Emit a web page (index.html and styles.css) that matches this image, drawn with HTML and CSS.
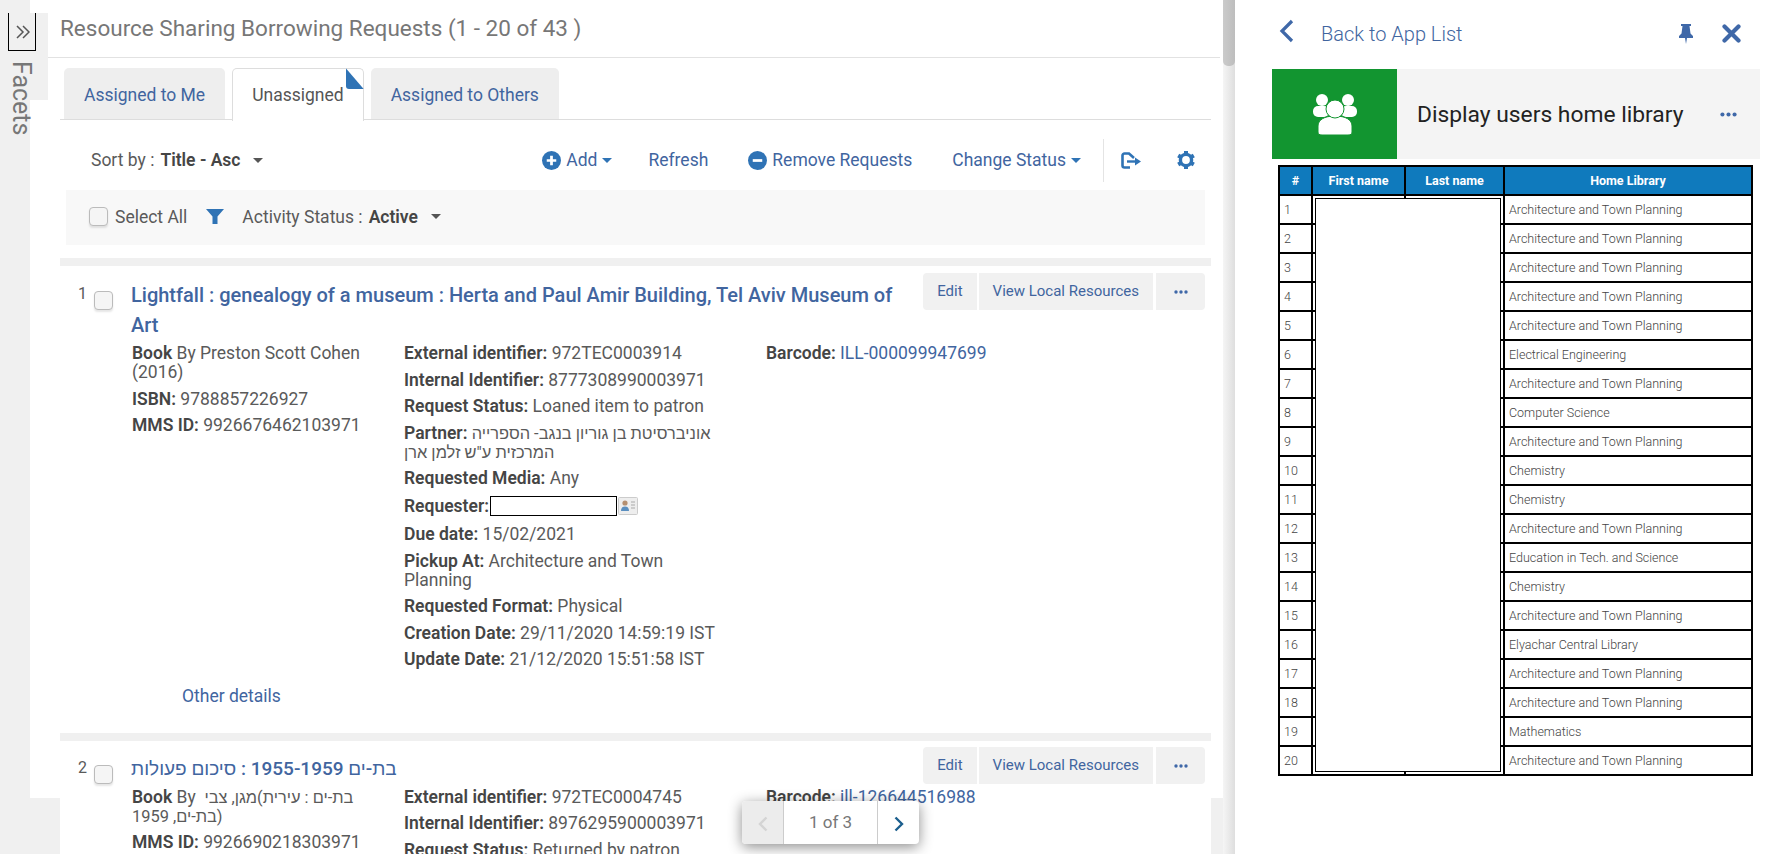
FILE: index.html
```html
<!DOCTYPE html>
<html>
<head>
	<meta charset="utf-8">
	<title>Resource Sharing Borrowing Requests</title>
	<link rel="stylesheet" href="styles.css">
</head>
<body>
<div class="app">
	<aside class="facets">
		<div class="facets_tab"></div>
		<div class="facets_btn"><svg class="facets_arrows" viewBox="0 0 14 14"><path d="M1 1l6 6-6 6M7 1l6 6-6 6" fill="none" stroke="#555" stroke-width="1.500"/></svg></div>
		<div class="facets_label">Facets</div>
	</aside>

	<main class="results">
		<h1 class="results_title">Resource Sharing Borrowing Requests (1 - 20 of 43 )</h1>

		<div class="tabs">
			<a class="tab">Assigned to Me</a>
			<a class="tab tab_active">Unassigned<span class="tab_corner"></span></a>
			<a class="tab">Assigned to Others</a>
		</div>

		<div class="toolbar">
			<span class="sort_label">Sort by :</span>
			<b class="sort_value">Title - Asc</b>
			<span class="caret caret_dark"></span>
			<div class="toolbar_actions">
				<a class="action action_add">
					<svg class="round_icon" viewBox="0 0 18 18"><circle cx="9" cy="9" r="9" fill="#2f73b5"/><path d="M9 4.500v9M4.500 9h9" stroke="#fff" stroke-width="2.600"/></svg>
					Add<span class="caret caret_blue"></span>
				</a>
				<a class="action">Refresh</a>
				<a class="action">
					<svg class="round_icon" viewBox="0 0 18 18"><circle cx="9" cy="9" r="9" fill="#2f73b5"/><path d="M4.500 9h9" stroke="#fff" stroke-width="2.600"/></svg>
					Remove Requests
				</a>
				<a class="action">Change Status<span class="caret caret_blue"></span></a>
				<span class="toolbar_divider"></span>
				<svg class="export_icon" viewBox="0 0 20 17"><path d="M9 15.500H3.500a2 2 0 0 1-2-2v-10a2 2 0 0 1 2-2H8l5 4.500" fill="none" stroke="#2f73b5" stroke-width="2.600"/><path d="M6 9.500h9" stroke="#2f73b5" stroke-width="2.400"/><path d="M14 5.500l6 4-6 4z" fill="#2f73b5"/></svg>
				<svg class="gear_icon" viewBox="0 0 18 18">
					<circle cx="9" cy="9" r="5.600" fill="none" stroke="#2f73b5" stroke-width="3.400"/>
					<path d="M9 0v3M9 15v3M1.200 4.500l2.600 1.500M14.200 12l2.600 1.500M1.200 13.500l2.600-1.500M14.200 6l2.600-1.500" stroke="#2f73b5" stroke-width="4"/>
				</svg>
			</div>
		</div>

		<div class="filterbar">
			<input type="checkbox" class="check">
			<span class="select_all">Select All</span>
			<svg class="filter_icon" viewBox="0 0 18 15"><path d="M0 0h18l-6.500 7.500V15h-5V7.500z" fill="#2f73b5"/></svg>
			<span class="sort_label">Activity Status :</span>
			<b class="sort_value">Active</b>
			<span class="caret caret_dark"></span>
		</div>

		<div class="band"></div>
		<article class="record record_first">
			<div class="record_index"><span class="record_num">1</span><input type="checkbox" class="check"></div>
			<div class="record_body">
				<div class="record_head">
					<a class="record_title">Lightfall : genealogy of a museum : Herta and Paul Amir Building, Tel Aviv Museum of Art</a>
					<div class="btn_group">
						<a class="btn">Edit</a>
						<a class="btn">View Local Resources</a>
						<a class="btn btn_more"><svg class="dots" viewBox="0 0 14 4"><circle cx="2" cy="2" r="1.700"/><circle cx="7" cy="2" r="1.700"/><circle cx="12" cy="2" r="1.700"/></svg></a>
					</div>
				</div>
				<div class="record_cols">
					<div class="col_one">
						<p><b>Book</b> By Preston Scott Cohen (2016)</p>
						<p><b>ISBN:</b> 9788857226927</p>
						<p><b>MMS ID:</b> 9926676462103971</p>
					</div>
					<div class="col_two">
						<p><b>External identifier:</b> 972TEC0003914</p>
						<p><b>Internal Identifier:</b> 8777308990003971</p>
						<p><b>Request Status:</b> Loaned item to patron</p>
						<p><b>Partner:</b> <span class="he">אוניברסיטת בן גוריון בנגב- הספרייה המרכזית ע"ש זלמן ארן</span></p>
						<p><b>Requested Media:</b> Any</p>
						<p class="requester"><b>Requester:</b><span class="hidden_name"></span>
							<svg class="card_icon" viewBox="0 0 20 18"><rect x=".5" y=".5" width="19" height="17" rx="1" fill="#eee" stroke="#ccc"/><circle cx="7" cy="6" r="2.600" fill="#b58f70"/><path d="M3 14c0-3 1.500-4.500 4-4.500s4 1.500 4 4.500z" fill="#5b8fc0"/><path d="M13 5h4M13 8h4M13 11h4" stroke="#aaa"/></svg>
						</p>
						<p><b>Due date:</b> 15/02/2021</p>
						<p><b>Pickup At:</b> Architecture and Town Planning</p>
						<p><b>Requested Format:</b> Physical</p>
						<p><b>Creation Date:</b> 29/11/2020 14:59:19 IST</p>
						<p><b>Update Date:</b> 21/12/2020 15:51:58 IST</p>
					</div>
					<div class="col_three">
						<p><b>Barcode:</b> <a class="link">ILL-000099947699</a></p>
					</div>
				</div>
				<a class="other_details">Other details</a>
			</div>
		</article>

		<div class="band"></div>
		<article class="record">
			<div class="record_index"><span class="record_num">2</span><input type="checkbox" class="check"></div>
			<div class="record_body">
				<div class="record_head">
					<a class="record_title title_he">בת-ים 1955-1959 : סיכום פעולות</a>
					<div class="btn_group">
						<a class="btn">Edit</a>
						<a class="btn">View Local Resources</a>
						<a class="btn btn_more"><svg class="dots" viewBox="0 0 14 4"><circle cx="2" cy="2" r="1.700"/><circle cx="7" cy="2" r="1.700"/><circle cx="12" cy="2" r="1.700"/></svg></a>
					</div>
				</div>
				<div class="record_cols">
					<div class="col_one">
						<p><b>Book</b> By &nbsp;<span class="he">בת-ים : עירית)מגן, צבי (בת-ים, 1959</span></p>
						<p><b>MMS ID:</b> 9926690218303971</p>
					</div>
					<div class="col_two">
						<p><b>External identifier:</b> 972TEC0004745</p>
						<p><b>Internal Identifier:</b> 8976295900003971</p>
						<p><b>Request Status:</b> Returned by patron</p>
					</div>
					<div class="col_three">
						<p><b>Barcode:</b> <a class="link">ill-126644516988</a></p>
					</div>
				</div>
			</div>
		</article>
	</main>

	<div class="scrolltrack"><div class="scrollthumb"></div></div>

	<aside class="apps">
		<div class="apps_top">
			<svg class="back_icon" viewBox="0 0 15 24"><path d="M13 2L3 12l10 10" fill="none" stroke="#3f68a8" stroke-width="3.200"/></svg>
			<a class="back_link">Back to App List</a>
			<svg class="pin_icon" viewBox="0 0 14 20"><path d="M2 0h10v2h-1.500l1 7.500L14 12v2H8l-1 6-1-6H0v-2l2.500-2.500 1-7.500H2z" fill="#3f68a8"/></svg>
			<svg class="close_icon" viewBox="0 0 19 19"><path d="M2.500 2.500l14 14M16.500 2.500l-14 14" stroke="#3f68a8" stroke-width="4.200" stroke-linecap="round"/></svg>
		</div>

		<div class="app_card">
			<div class="app_logo">
				<svg class="users_icon" viewBox="0 0 44 41">
					<circle cx="9" cy="6" r="6" fill="#fff"/>
					<circle cx="35" cy="6" r="6" fill="#fff"/>
					<rect x="0" y="12" width="16" height="11" rx="5" fill="#fff"/>
					<rect x="28" y="12" width="16" height="11" rx="5" fill="#fff"/>
					<path d="M9 41c-3 0-4-1-4-3v-6c0-6 6-10 17-10s17 4 17 10v6c0 2-1 3-4 3z" fill="#fff" stroke="#129530" stroke-width="1"/>
					<circle cx="22" cy="15" r="9" fill="#fff" stroke="#129530" stroke-width="1"/>
				</svg>
			</div>
			<div class="app_name">Display users home library</div>
			<svg class="dots app_dots" viewBox="0 0 14 4"><circle cx="2" cy="2" r="1.700"/><circle cx="7" cy="2" r="1.700"/><circle cx="12" cy="2" r="1.700"/></svg>
		</div>

		<div class="table_wrap">
			<table class="lib_table">
				<colgroup><col class="c_num"><col class="c_first"><col class="c_last"><col class="c_home"></colgroup>
				<thead><tr><th>#</th><th>First name</th><th>Last name</th><th>Home Library</th></tr></thead>
				<tbody>
					<tr><td>1</td><td></td><td></td><td>Architecture and Town Planning</td></tr>
					<tr><td>2</td><td></td><td></td><td>Architecture and Town Planning</td></tr>
					<tr><td>3</td><td></td><td></td><td>Architecture and Town Planning</td></tr>
					<tr><td>4</td><td></td><td></td><td>Architecture and Town Planning</td></tr>
					<tr><td>5</td><td></td><td></td><td>Architecture and Town Planning</td></tr>
					<tr><td>6</td><td></td><td></td><td>Electrical Engineering</td></tr>
					<tr><td>7</td><td></td><td></td><td>Architecture and Town Planning</td></tr>
					<tr><td>8</td><td></td><td></td><td>Computer Science</td></tr>
					<tr><td>9</td><td></td><td></td><td>Architecture and Town Planning</td></tr>
					<tr><td>10</td><td></td><td></td><td>Chemistry</td></tr>
					<tr><td>11</td><td></td><td></td><td>Chemistry</td></tr>
					<tr><td>12</td><td></td><td></td><td>Architecture and Town Planning</td></tr>
					<tr><td>13</td><td></td><td></td><td>Education in Tech. and Science</td></tr>
					<tr><td>14</td><td></td><td></td><td>Chemistry</td></tr>
					<tr><td>15</td><td></td><td></td><td>Architecture and Town Planning</td></tr>
					<tr><td>16</td><td></td><td></td><td>Elyachar Central Library</td></tr>
					<tr><td>17</td><td></td><td></td><td>Architecture and Town Planning</td></tr>
					<tr><td>18</td><td></td><td></td><td>Architecture and Town Planning</td></tr>
					<tr><td>19</td><td></td><td></td><td>Mathematics</td></tr>
					<tr><td>20</td><td></td><td></td><td>Architecture and Town Planning</td></tr>
				</tbody>
			</table>
			<div class="redacted"></div>
		</div>
	</aside>

	<div class="corner corner_left"></div>
	<div class="corner corner_right"></div>

	<div class="pager">
		<span class="pager_prev"><svg class="pager_icon" viewBox="0 0 10 16"><path d="M8.500 1.500L2 8l6.500 6.500" fill="none" stroke="#d4d4d4" stroke-width="2.400"/></svg></span>
		<span class="pager_text">1 of 3</span>
		<span class="pager_next"><svg class="pager_icon" viewBox="0 0 10 16"><path d="M1.500 1.500L8 8l-6.500 6.500" fill="none" stroke="#1c5f8e" stroke-width="2.400"/></svg></span>
	</div>
</div>
</body>
</html>
```

FILE: styles.css
```css
* {
	box-sizing:border-box;
}
html, body {
	margin:0;
	height:100%;
	overflow:hidden;
	background:#fff;
}
body {
	font-family:Roboto, "Liberation Sans", sans-serif;
	font-size:17.500px;
	color:#5a5a5a;
}
p {
	margin:0;
}
a {
	color:#41659f;
}
b {
	font-weight:600;
	color:#454545;
}
.he {
	font-size:16.400px;
}
.app {
	position:relative;
	display:flex;
	width:1788px;
	height:854px;
	overflow:hidden;
}

/* facets strip */
.facets {
	position:relative;
	flex:0 0 30px;
	background:#f0f0f0;
}
.facets_tab {
	position:absolute;
	left:30px;
	top:13px;
	width:18px;
	height:87px;
	background:#f0f0f0;
}
.facets_btn {
	position:absolute;
	left:8px;
	top:13px;
	width:28px;
	height:38px;
	padding:12px 0 0 7px;
	border:solid 1px #000;
	border-top:none;
}
.facets_arrows {
	display:block;
	width:14px;
	height:14px;
}
.facets_label {
	position:absolute;
	left:9px;
	top:61px;
	writing-mode:vertical-rl;
	font-size:25px;
	line-height:25px;
	color:#777;
}

/* results */
.results {
	flex:0 0 1193px;
	padding:0 12px 0 30px;
}
.results_title {
	margin:0 -9px 0 -12px;
	padding:0 0 0 12px;
	height:58px;
	line-height:56px;
	border-bottom:solid 1px #e2e2e2;
	font-size:22.500px;
	font-weight:400;
	color:#777;
	white-space:nowrap;
}
.tabs {
	display:flex;
	gap:7px;
	margin-top:10px;
	padding-left:4px;
	height:52px;
	border-bottom:solid 1px #ddd;
}
.tab {
	position:relative;
	height:51px;
	padding:0 20px;
	line-height:55px;
	background:#eee;
	border-radius:5px 5px 0 0;
	white-space:nowrap;
}
.tab_active {
	height:53px;
	background:#fff;
	border:solid 1px #ddd;
	border-bottom:none;
	color:#555;
	line-height:53px;
	padding:0 19px;
}
.tab_corner {
	position:absolute;
	right:-1px;
	top:-1px;
	width:18px;
	height:21px;
	background:#2f73b5;
	clip-path:polygon(0 0, 100% 100%, 0 100%);
	border-radius:0 0 0 3px;
}
.toolbar {
	display:flex;
	align-items:center;
	height:70px;
	padding:10px 16px 0 31px;
	white-space:nowrap;
}
.sort_value {
	margin-left:6px;
}
.caret {
	display:inline-block;
	width:0;
	height:0;
	border-left:5px solid transparent;
	border-right:5px solid transparent;
	border-top:5px solid #555;
}
.caret_dark {
	margin-left:13px;
}
.caret_blue {
	margin-left:5px;
	border-top-color:#2f73b5;
}
.toolbar_actions {
	display:flex;
	align-items:center;
	margin-left:auto;
}
.action {
	display:flex;
	align-items:center;
	margin-right:40px;
}
.action_add {
	margin-right:36px;
}
.round_icon {
	width:19px;
	height:19px;
	margin-right:5px;
}
.toolbar_divider {
	width:1px;
	height:43px;
	margin:0 17px 0 -18px;
	background:#e4e4e4;
}
.export_icon {
	width:20px;
	height:17px;
	margin-right:36px;
}
.gear_icon {
	width:18px;
	height:18px;
}
.filterbar {
	display:flex;
	align-items:center;
	height:55px;
	margin:0 6px;
	padding:0 0 2px 23px;
	background:#f8f8f8;
}
.check {
	appearance:none;
	flex:none;
	width:19px;
	height:19px;
	margin:0;
	background:#f5f5f5;
	border:solid 1px #bbb;
	border-radius:4px;
	box-shadow:0 2px 2px rgba(0, 0, 0, .1);
}
.select_all {
	margin-left:7px;
}
.filter_icon {
	width:18px;
	height:15px;
	margin:0 18px 1px 19px;
}
.band {
	height:8px;
	margin-top:13px;
	background:#f0f0f0;
}
.record + .band {
	margin-top:0;
}
.record {
	display:flex;
	padding-top:6px;
	padding-bottom:27px;
}
.record_first {
	padding-top:7px;
}
.record_index {
	flex:0 0 71px;
	display:flex;
	align-items:flex-start;
	padding:11px 0 0 18px;
}
.record_num {
	width:16px;
	line-height:20px;
	font-size:16px;
}
.record_index .check {
	margin-top:7px;
}
.record_body {
	flex:1;
	padding-right:6px;
}
.record_head {
	display:flex;
	justify-content:space-between;
	align-items:flex-start;
}
.record_title {
	width:775px;
	margin-top:7px;
	font-size:20px;
	font-weight:500;
	line-height:30px;
}
.title_he {
	font-size:19px;
}
.btn_group {
	display:flex;
	gap:2px;
}
.btn {
	height:37px;
	padding:0 14px;
	line-height:36px;
	font-size:15px;
	background:#f1f1f1;
	white-space:nowrap;
}
.btn:first-child {
	border-radius:4px 0 0 4px;
}
.btn_more {
	margin-left:1px;
	width:49px;
	padding:0;
	border-radius:0 4px 4px 0;
	text-align:center;
}
.dots {
	width:14px;
	height:4px;
	fill:#3f68a8;
	vertical-align:2px;
}
.record_cols {
	display:flex;
	margin-top:4px;
	line-height:19px;
}
.record_cols p {
	margin-bottom:7.500px;
}
.record_cols .requester {
	display:flex;
	align-items:center;
	height:21px;
	margin-bottom:8.500px;
}
.col_one {
	flex:0 0 273px;
	padding:0 32px 0 1px;
}
.col_two {
	flex:0 0 362px;
	padding-right:38px;
}
.hidden_name {
	width:127px;
	height:20px;
	margin-left:1px;
	border:solid 1px #000;
	background:#fff;
}
.card_icon {
	width:20px;
	height:18px;
	margin-left:1px;
}
.link {
	color:#41659f;
}
.other_details {
	display:block;
	margin:10px 0 0 51px;
	line-height:19px;
}

/* scrollbar */
.scrolltrack {
	flex:0 0 12px;
	background:linear-gradient(90deg, #f5f5f5, #dedede);
}
.scrollthumb {
	height:66px;
	background:linear-gradient(90deg, #cbcbcb, #bdbdbd);
	border-radius:0 0 5px 5px;
}
.corner {
	position:absolute;
	top:798px;
	bottom:0;
	background:#f0f0f0;
}
.corner_left {
	left:0;
	width:60px;
}
.corner_right {
	left:1211px;
	width:12px;
}

/* app panel */
.apps {
	flex:1;
	padding:0 28px 0 37px;
}
.apps_top {
	display:flex;
	align-items:center;
	height:67px;
	margin-bottom:2px;
	padding-left:7px;
}
.back_icon {
	width:15px;
	height:24px;
	margin-bottom:6px;
}
.back_link {
	margin-left:27px;
	font-size:20px;
	font-weight:300;
}
.pin_icon {
	width:14px;
	height:20px;
	margin-left:auto;
}
.close_icon {
	width:19px;
	height:19px;
	margin:0 19px 0 29px;
}
.app_card {
	display:flex;
	align-items:center;
	height:90px;
	background:#f4f4f4;
}
.app_logo {
	display:flex;
	align-items:center;
	justify-content:center;
	width:125px;
	height:90px;
	background:#129530;
}
.users_icon {
	width:44px;
	height:41px;
}
.app_name {
	margin-left:20px;
	font-size:22.800px;
	color:#222;
}
.app_dots {
	width:17px;
	height:5px;
	margin-left:auto;
	margin-right:23px;
}
.table_wrap {
	position:relative;
	margin:6px 7px 0 6px;
}
.lib_table {
	width:475px;
	table-layout:fixed;
	border-collapse:collapse;
	border:solid 2px #000;
}
.c_num {
	width:33px;
}
.c_first {
	width:93px;
}
.c_last {
	width:99px;
}
.lib_table th {
	height:29px;
	padding:0;
	border:solid 2px #000;
	background:#0f7abd;
	color:#fff;
	font-size:12.500px;
	font-weight:700;
	text-align:center;
}
.lib_table td {
	height:29px;
	padding:0 4px;
	border:solid 2px #000;
	font-size:12.500px;
	font-weight:300;
	color:#444;
	white-space:nowrap;
}
.redacted {
	position:absolute;
	left:37px;
	top:33px;
	width:186px;
	height:574px;
	background:#fff;
	border:solid 1px #000;
}

/* pager floats over the list */
.pager {
	position:absolute;
	left:742px;
	top:801px;
	display:flex;
	width:177px;
	height:43px;
	background:#fff;
	border-radius:4px;
	box-shadow:0 3px 14px rgba(0, 0, 0, .45);
	overflow:hidden;
}
.pager_prev, .pager_next {
	display:flex;
	align-items:center;
	justify-content:center;
	width:42px;
	padding-top:3px;
}
.pager_prev {
	background:#ececec;
	border-right:solid 1px #ccc;
}
.pager_next {
	border-left:solid 1px #ccc;
}
.pager_text {
	flex:1;
	text-align:center;
	line-height:42px;
	font-size:17px;
	color:#777;
}
.pager_icon {
	width:10px;
	height:16px;
}
```
